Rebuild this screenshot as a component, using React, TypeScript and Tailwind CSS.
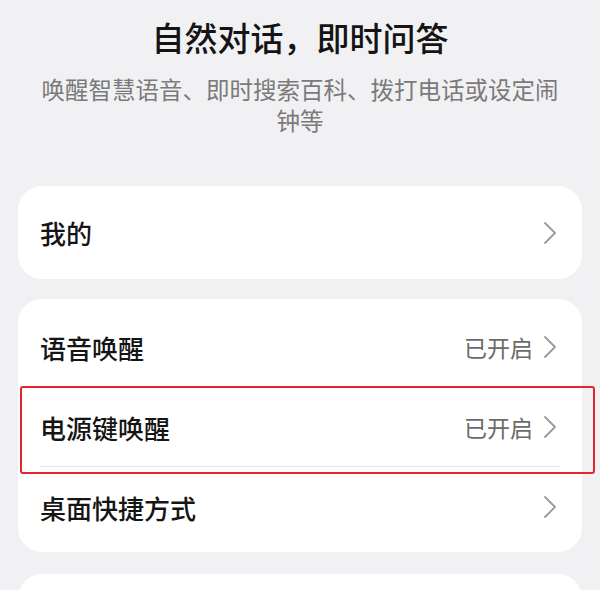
import React from 'react';

const font = { fontFamily: '"Noto Sans CJK SC", "Noto Sans", sans-serif' };

function Chevron() {
  return (
    <svg width="14" height="24" viewBox="0 0 14 24" fill="none" className="shrink-0">
      <path d="M2 2 L12 12 L2 22" stroke="#9a9a9a" strokeWidth="1.8" strokeLinecap="round" strokeLinejoin="round" />
    </svg>
  );
}

function Row({ label, value, divider }: { label: string; value?: string; divider?: boolean }) {
  return (
    <div className="relative h-[80px] flex items-center justify-between pl-[22px] pr-[25px]">
      <span className="text-[26px] font-medium text-[#151515]">{label}</span>
      <div className="flex items-center gap-[10px]">
        {value && <span className="text-[23px] text-[#6b6b6b]">{value}</span>}
        <Chevron />
      </div>
      {divider && <div className="absolute left-[22px] right-[22px] bottom-0 h-px bg-[#e6e6e8]" />}
    </div>
  );
}

export default function App() {
  return (
    <div className="w-[600px] h-[590px] overflow-hidden bg-[#f1f1f3]" style={font}>
      {/* Header */}
      <div className="pt-[14px] text-center">
        <h1 className="text-[33px] leading-[46px] font-medium text-[#141414]">自然对话，即时问答</h1>
        <p className="mt-[14px] px-[38px] text-[23.5px] leading-[31px] text-[#7a7a7a]">
          唤醒智慧语音、即时搜索百科、拨打电话或设定闹钟等
        </p>
      </div>

      {/* Cards */}
      <div className="mt-[50px] mx-[18px] bg-white rounded-[24px] h-[93px] flex items-center justify-between pl-[22px] pr-[25px]">
        <span className="text-[26px] font-medium text-[#151515]">我的</span>
        <Chevron />
      </div>

      <div className="relative mt-[20px] mx-[18px]">
        <div className="bg-white rounded-[24px] pt-[8px] pb-[5px]">
          <Row label="语音唤醒" value="已开启" divider />
          <Row label="电源键唤醒" value="已开启" divider />
          <Row label="桌面快捷方式" />
        </div>
        {/* annotation box */}
        <div className="absolute left-[2px] -right-[13px] top-[87px] h-[88px] border-2 border-[#e3262b] rounded-[3px]" />
      </div>

      <div className="mt-[22px] mx-[18px] bg-white rounded-[24px] h-[80px]" />
    </div>
  );
}
